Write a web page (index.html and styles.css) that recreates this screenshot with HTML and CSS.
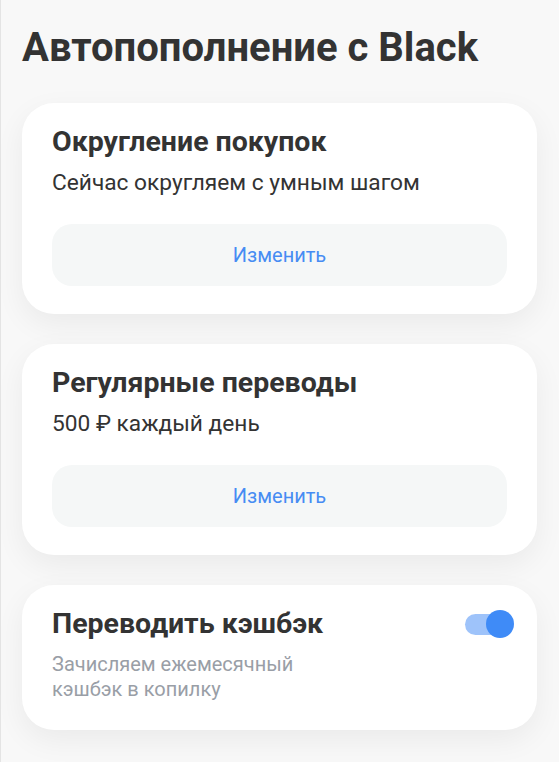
FILE: index.html
```html
<!DOCTYPE html>
<html lang="ru">
<head>
  <meta charset="UTF-8" />
  <title>Автопополнение с Black</title>
  <link rel="stylesheet" href="styles.css">
</head>
<body>
  <div class="page">
    <h1 class="title">Автопополнение с Black</h1>

    <!-- Округление -->
    <div class="card">
      <h2 class="card-title">Округление покупок</h2>
      <p class="card-text">Сейчас округляем с умным шагом</p>
      <button class="btn">Изменить</button>
    </div>

    <!-- Регулярные переводы -->
    <div class="card">
      <h2 class="card-title">Регулярные переводы</h2>
      <p class="card-text">500 ₽ каждый день</p>
      <button class="btn">Изменить</button>
    </div>

    <!-- Кэшбэк -->
    <div class="card card-toggle">
      <div class="row">
        <h2 class="card-title">Переводить кэшбэк</h2>
        <div class="switch on"><span class="knob"></span></div>
      </div>
      <p class="card-hint">Зачисляем ежемесячный<br>кэшбэк в копилку</p>
    </div>
  </div>
</body>
</html>
```

FILE: styles.css
```css
body {
  margin: 0;
  font-family: Roboto, "Noto Sans", Arial, sans-serif;
  background-color: #f8f8f8;
  color: #333;
}
.page {
  min-height: 100vh;
  border-left: 1px solid #e4e4e4;
  padding: 20px 22px 30px 21px;
  box-sizing: border-box;
}
.title {
  margin: 0 0 27px 0;
  font-size: 40px;
  font-weight: 700;
  line-height: 56px;
  color: #333;
}
.card {
  background: white;
  border-radius: 32px;
  padding: 21px 30px 28px 30px;
  margin-bottom: 30px;
  box-shadow: 0 10px 30px rgba(0,0,0,0.06);
}
.card-title {
  margin: 0;
  font-size: 28.5px;
  font-weight: 700;
  line-height: 36px;
  color: #333;
}
.card-text {
  margin: 8px 0 26px 0;
  font-size: 22.7px;
  line-height: 30px;
  color: #333;
}
.btn {
  display: block;
  width: 100%;
  height: 62px;
  border: none;
  border-radius: 20px;
  background-color: #f5f7f7;
  color: #468cf3;
  font-family: inherit;
  font-size: 20px;
  cursor: pointer;
}

/* Кэшбэк */
.card-toggle {
  padding-top: 21px;
  padding-bottom: 28px;
  padding-right: 23px;
}
.row {
  display: flex;
  align-items: center;
  justify-content: space-between;
}
.switch {
  position: relative;
  width: 40px;
  height: 21px;
  border-radius: 11px;
  background-color: #9ec3fa;
  margin-right: 9px;
}
.knob {
  position: absolute;
  top: -4px;
  left: 21px;
  width: 28px;
  height: 28px;
  border-radius: 50%;
  background-color: #3f8bf7;
}
.card-hint {
  margin: 10px 0 0 0;
  font-size: 20px;
  line-height: 25px;
  color: #999ea6;
}
```
